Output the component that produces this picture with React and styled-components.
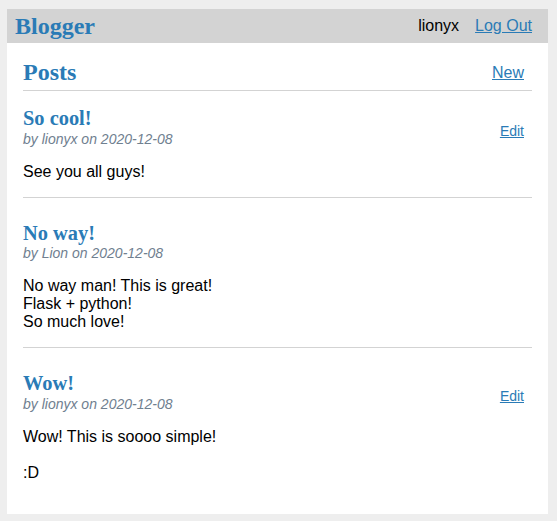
import React from "react";
import styled, { createGlobalStyle } from "styled-components";

const BLUE = "#2a7bb6";

const Global = createGlobalStyle`
  html {
    font-family: "Liberation Sans", Arial, sans-serif;
    background: #eee;
    padding: 9px 9px 8px 7px;
    margin: 0;
  }
  body {
    max-width: 960px;
    margin: 0 auto;
    background: white;
  }
`;

const Nav = styled.nav`
  background: lightgray;
  display: flex;
  align-items: center;
  padding: 0 8px;
`;

const Brand = styled.h1`
  flex: auto;
  margin: 0;
  font-family: "Liberation Serif", "Times New Roman", serif;
  font-size: 24px;
  font-weight: bold;
  a {
    color: ${BLUE};
    text-decoration: none;
  }
`;

const NavList = styled.ul`
  display: flex;
  list-style: none;
  margin: 0;
  padding: 0;
`;

const NavItem = styled.li`
  display: block;
  padding: 8px;
  font-size: 16px;
  line-height: 18px;
  color: #000;
  a {
    color: ${BLUE};
  }
`;

const Content = styled.section`
  padding: 0 16px 16px;
`;

const PageHeader = styled.header`
  border-bottom: 1px solid lightgray;
  display: flex;
  align-items: flex-end;
`;

const PageTitle = styled.h1`
  flex: auto;
  margin: 16px 0 4px 0;
  font-family: "Liberation Serif", "Times New Roman", serif;
  font-size: 24px;
  color: ${BLUE};
`;

const Action = styled.a`
  display: block;
  padding: 8px;
  color: ${BLUE};
  font-size: ${(p) => p.$size || "16px"};
`;

const Post = styled.article``;

const PostHeader = styled.header`
  display: flex;
  align-items: flex-end;
  font-size: 14px;
`;

const PostHead = styled.div`
  flex: auto;
`;

const PostTitle = styled.h1`
  font-family: "Liberation Serif", "Times New Roman", serif;
  font-size: 20.4px;
  line-height: 23.5px;
  color: ${BLUE};
  margin: 16px 0 0;
`;

const About = styled.div`
  color: slategray;
  font-style: italic;
  line-height: 16px;
`;

const Body = styled.p`
  white-space: pre-line;
  font-size: 16px;
  margin: 16px 0;
`;

const Rule = styled.hr`
  border: none;
  border-top: 1px solid lightgray;
  margin: 8px 0;
`;

const posts = [
  { title: "So cool!", author: "lionyx", date: "2020-12-08", body: "See you all guys!", edit: true },
  { title: "No way!", author: "Lion", date: "2020-12-08", body: "No way man! This is great!\nFlask + python!\nSo much love!", edit: false },
  { title: "Wow!", author: "lionyx", date: "2020-12-08", body: "Wow! This is soooo simple!\n\n:D", edit: true },
];

export default function App() {
  return (
    <>
      <Global />
      <Nav>
        <Brand><a href="#">Blogger</a></Brand>
        <NavList>
          <NavItem>lionyx</NavItem>
          <NavItem><a href="#">Log Out</a></NavItem>
        </NavList>
      </Nav>
      <Content>
        <PageHeader>
          <PageTitle>Posts</PageTitle>
          <Action href="#">New</Action>
        </PageHeader>
        {posts.map((p, i) => (
          <React.Fragment key={i}>
            <Post>
              <PostHeader>
                <PostHead>
                  <PostTitle>{p.title}</PostTitle>
                  <About>by {p.author} on {p.date}</About>
                </PostHead>
                {p.edit && <Action href="#" $size="14px">Edit</Action>}
              </PostHeader>
              <Body>{p.body}</Body>
            </Post>
            {i < posts.length - 1 && <Rule />}
          </React.Fragment>
        ))}
      </Content>
    </>
  );
}
